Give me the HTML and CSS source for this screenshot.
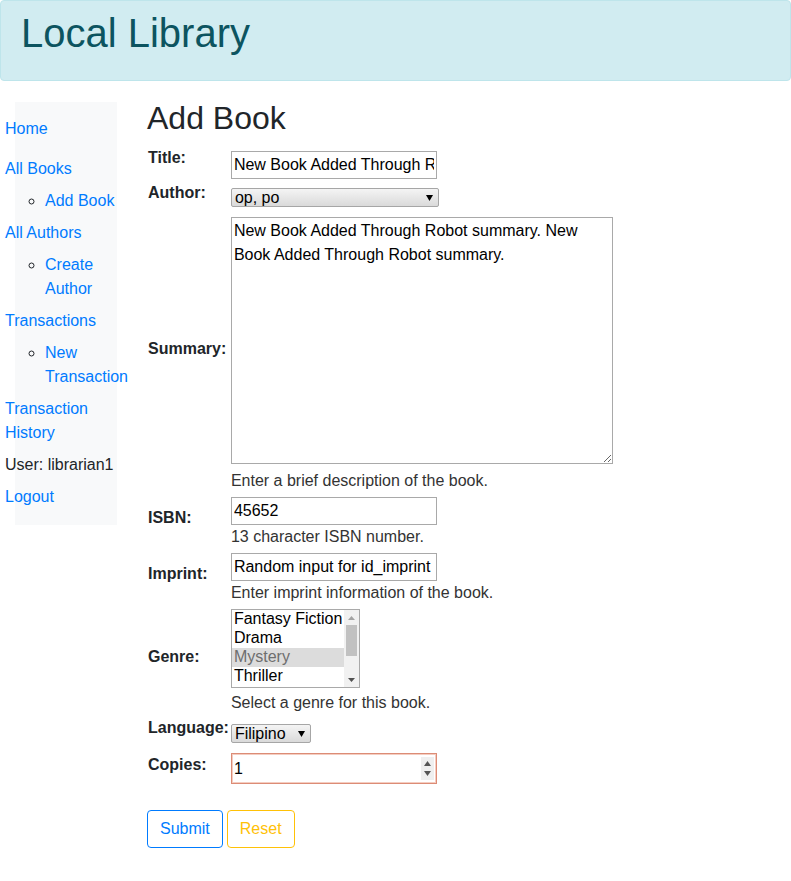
FILE: index.html
```html
<!DOCTYPE html>
<html lang="en">
<head>
<meta charset="utf-8">
<title>Local Library</title>
<link rel="stylesheet" href="styles.css">
</head>
<body>
<header class="banner">
  <h1 class="banner-title">Local Library</h1>
</header>
<div class="layout">
  <div class="sidebar-col">
    <nav class="sidebar">
      <ul class="nav-list">
        <li class="nav-item nav-home"><a href="#">Home</a></li>
        <li class="nav-item"><a href="#">All Books</a>
          <ul class="sub-list">
            <li><a href="#">Add Book</a></li>
          </ul>
        </li>
        <li class="nav-item"><a href="#">All Authors</a>
          <ul class="sub-list">
            <li><a href="#">Create Author</a></li>
          </ul>
        </li>
        <li class="nav-item"><a href="#">Transactions</a>
          <ul class="sub-list">
            <li><a href="#">New Transaction</a></li>
          </ul>
        </li>
        <li class="nav-item"><a href="#">Transaction History</a></li>
        <li class="nav-item nav-user">User: librarian1</li>
        <li class="nav-item"><a href="#">Logout</a></li>
      </ul>
    </nav>
  </div>
  <main class="content">
    <h1 class="page-title">Add Book</h1>
    <form class="book-form">
      <table class="form-table">
        <tr class="row-title">
          <th><label>Title:</label></th>
          <td><input class="text-input" type="text" value="New Book Added Through Robot"></td>
        </tr>
        <tr class="row-author">
          <th><label>Author:</label></th>
          <td>
            <span class="select-wrap select-author">
              <select class="select-box"><option>op, po</option></select>
              <svg class="select-arrow" width="7" height="6" viewBox="0 0 7 6"><polygon points="0,0 7,0 3.5,6" fill="#000"/></svg>
            </span>
          </td>
        </tr>
        <tr class="row-summary">
          <th><label>Summary:</label></th>
          <td>
            <textarea class="text-area" cols="40" rows="10">New Book Added Through Robot summary. New Book Added Through Robot summary.</textarea>
            <span class="helptext">Enter a brief description of the book.</span>
          </td>
        </tr>
        <tr class="row-field">
          <th><label>ISBN:</label></th>
          <td>
            <input class="text-input" type="text" value="45652">
            <span class="helptext">13 character ISBN number.</span>
          </td>
        </tr>
        <tr class="row-field">
          <th><label>Imprint:</label></th>
          <td>
            <input class="text-input" type="text" value="Random input for id_imprint">
            <span class="helptext">Enter imprint information of the book.</span>
          </td>
        </tr>
        <tr class="row-genre">
          <th><label>Genre:</label></th>
          <td>
            <div class="listbox">
              <div class="listbox-options">
                <div class="listbox-option">Fantasy Fiction</div>
                <div class="listbox-option">Drama</div>
                <div class="listbox-option is-selected">Mystery</div>
                <div class="listbox-option">Thriller</div>
              </div>
              <div class="scrollbar">
                <div class="scroll-btn">
                  <svg width="7" height="4" viewBox="0 0 7 4"><polygon points="0,4 7,4 3.5,0" fill="#a3a3a3"/></svg>
                </div>
                <div class="scroll-track"><div class="scroll-thumb"></div></div>
                <div class="scroll-btn">
                  <svg width="7" height="4" viewBox="0 0 7 4"><polygon points="0,0 7,0 3.5,4" fill="#505050"/></svg>
                </div>
              </div>
            </div>
            <span class="helptext helptext-genre">Select a genre for this book.</span>
          </td>
        </tr>
        <tr class="row-language">
          <th><label>Language:</label></th>
          <td>
            <span class="select-wrap select-language">
              <select class="select-box"><option>Filipino</option></select>
              <svg class="select-arrow" width="7" height="6" viewBox="0 0 7 6"><polygon points="0,0 7,0 3.5,6" fill="#000"/></svg>
            </span>
          </td>
        </tr>
        <tr class="row-copies">
          <th><label>Copies:</label></th>
          <td>
            <div class="number-box">
              <input class="number-input" type="text" value="1">
              <div class="spinner">
                <svg width="7" height="5" viewBox="0 0 7 5"><polygon points="0,5 7,5 3.5,0" fill="#555"/></svg>
                <svg width="7" height="5" viewBox="0 0 7 5"><polygon points="0,0 7,0 3.5,5" fill="#555"/></svg>
              </div>
            </div>
          </td>
        </tr>
      </table>
      <div class="actions">
        <button type="submit" class="btn btn-primary">Submit</button>
        <button type="reset" class="btn btn-warning">Reset</button>
      </div>
    </form>
  </main>
</div>
</body>
</html>
```
FILE: styles.css
```css
html, body {
  margin: 0;
  padding: 0;
}

body {
  font-family: "Liberation Sans", Arial, sans-serif;
  font-size: 16px;
  line-height: 1.5;
  color: #212529;
  background: #fff;
}

a {
  color: #007bff;
  text-decoration: none;
}

/* Header banner */
.banner {
  box-sizing: border-box;
  width: 791px;
  background: #d1ecf1;
  border: 1px solid #bee5eb;
  border-radius: 4px;
  color: #0c5460;
  padding: 8px 20px 15px;
  margin-bottom: 21px;
}

.banner-title {
  margin: 0 0 8px;
  font-size: 40px;
  line-height: 48px;
  font-weight: 500;
}

/* Layout */
.layout {
  display: flex;
  align-items: flex-start;
}

.sidebar-col {
  box-sizing: border-box;
  width: 132px;
  flex: 0 0 132px;
  padding: 0 15px;
}

.sidebar {
  background: #f8f9fa;
}

.nav-list {
  list-style: none;
  margin: 0 0 0 -10px;
  padding: 15px 0 16px;
  display: flex;
  flex-direction: column;
  gap: 8px;
}

.nav-item {
  line-height: 24px;
}

.nav-home {
  margin-bottom: 8px;
}

.nav-user {
  color: #212529;
}

.sub-list {
  list-style: circle;
  margin: 8px 0 0;
  padding-left: 40px;
}

.content {
  flex: 1;
  padding-left: 15px;
}

.page-title {
  margin: 0 0 6px;
  font-size: 32px;
  line-height: 32px;
  font-weight: 500;
  color: #212529;
}

/* Form table */
.form-table {
  border-collapse: collapse;
}

.form-table th {
  text-align: left;
  vertical-align: middle;
  font-weight: bold;
  padding: 0 2px 0 1px;
  line-height: 24px;
  white-space: nowrap;
}

.form-table th label {
  display: inline-block;
  margin-bottom: 8px;
}

.form-table td {
  vertical-align: middle;
  padding: 0;
}

.row-title td { padding: 11px 0 1px; }
.row-title th { padding-top: 4px; }
.row-author td { vertical-align: top; padding: 8px 0 0; }
.row-author th { vertical-align: top; padding-top: 1px; height: 32px; box-sizing: border-box; }
.row-author th label { margin-bottom: 0; }
.row-summary td { padding: 5px 0 1px; }
.row-field td { padding: 3px 0 1px; }
.row-genre td { padding: 3px 0 1px; }
.row-language td { padding: 8px 0 5px; }
.row-copies td { padding: 5px 0 5px; }

.text-input {
  display: block;
  box-sizing: border-box;
  width: 206px;
  height: 28px;
  margin: 0;
  padding: 1px 2px;
  border: 1px solid #a9a9a9;
  font-family: "Liberation Sans", Arial, sans-serif;
  font-size: 16px;
  line-height: 24px;
  color: #000;
  background: #fff;
}

.text-area {
  display: block;
  box-sizing: border-box;
  width: 382px;
  height: 247px;
  margin: 0 0 5px;
  padding: 1px 2px;
  border: 1px solid #a9a9a9;
  font-family: "Liberation Sans", Arial, sans-serif;
  font-size: 16px;
  line-height: 24px;
  color: #000;
}

.helptext {
  display: block;
  line-height: 24px;
  color: #333;
}

.helptext-genre {
  margin-top: 3px;
}

/* Selects */
.select-wrap {
  display: block;
  position: relative;
  width: max-content;
}

.select-box {
  display: block;
  appearance: none;
  -webkit-appearance: none;
  box-sizing: border-box;
  height: 19px;
  margin: 0;
  padding: 0 3px;
  border: 1px solid #a6a6a6;
  border-radius: 2px;
  background: linear-gradient(#f4f4f4, #dadada);
  font-family: "Liberation Sans", Arial, sans-serif;
  font-size: 16px;
  line-height: 17px;
  color: #000;
}

.select-author .select-box { width: 208px; }
.select-language .select-box { width: 80px; }

.select-arrow {
  position: absolute;
  right: 6px;
  top: 7px;
  pointer-events: none;
}

/* Genre listbox */
.listbox {
  display: flex;
  box-sizing: border-box;
  width: 129px;
  height: 79px;
  border: 1px solid #a9a9a9;
  background: #fff;
  overflow: hidden;
}

.listbox-options {
  flex: 1;
  min-width: 0;
}

.listbox-option {
  height: 19px;
  line-height: 18px;
  padding: 0 2px;
  color: #000;
  white-space: nowrap;
}

.listbox-option.is-selected {
  background: #dcdcdc;
  color: #6e6e6e;
}

.scrollbar {
  width: 15px;
  display: flex;
  flex-direction: column;
  background: #f1f1f1;
}

.scroll-btn {
  height: 15px;
  display: flex;
  align-items: center;
  justify-content: center;
}

.scroll-track {
  flex: 1;
  display: flex;
  justify-content: center;
}

.scroll-thumb {
  width: 11px;
  height: 31px;
  background: #c1c1c1;
}

/* Number input */
.number-box {
  display: flex;
  align-items: center;
  box-sizing: border-box;
  width: 206px;
  height: 31px;
  padding: 0 2px 0 1px;
  border: 1px solid #dc8c76;
  box-shadow: inset 0 0 0 1px #f4cdc1;
  background: #fff;
}

.number-input {
  flex: 1;
  min-width: 0;
  border: none;
  outline: none;
  background: transparent;
  margin: 0;
  padding: 0 1px;
  font-family: "Liberation Sans", Arial, sans-serif;
  font-size: 16px;
  line-height: 24px;
  color: #000;
}

.spinner {
  width: 13px;
  height: 23px;
  background: #efefef;
  display: flex;
  flex-direction: column;
  align-items: center;
  justify-content: space-evenly;
}

/* Buttons */
.actions {
  margin-top: 21px;
  display: flex;
  gap: 4px;
}

.btn {
  box-sizing: border-box;
  height: 38px;
  padding: 6px 12px;
  border: 1px solid;
  border-radius: 4px;
  background: transparent;
  font-family: "Liberation Sans", Arial, sans-serif;
  font-size: 16px;
  line-height: 24px;
  cursor: pointer;
}

.btn-primary {
  color: #007bff;
  border-color: #007bff;
}

.btn-warning {
  color: #ffc107;
  border-color: #ffc107;
}
```
